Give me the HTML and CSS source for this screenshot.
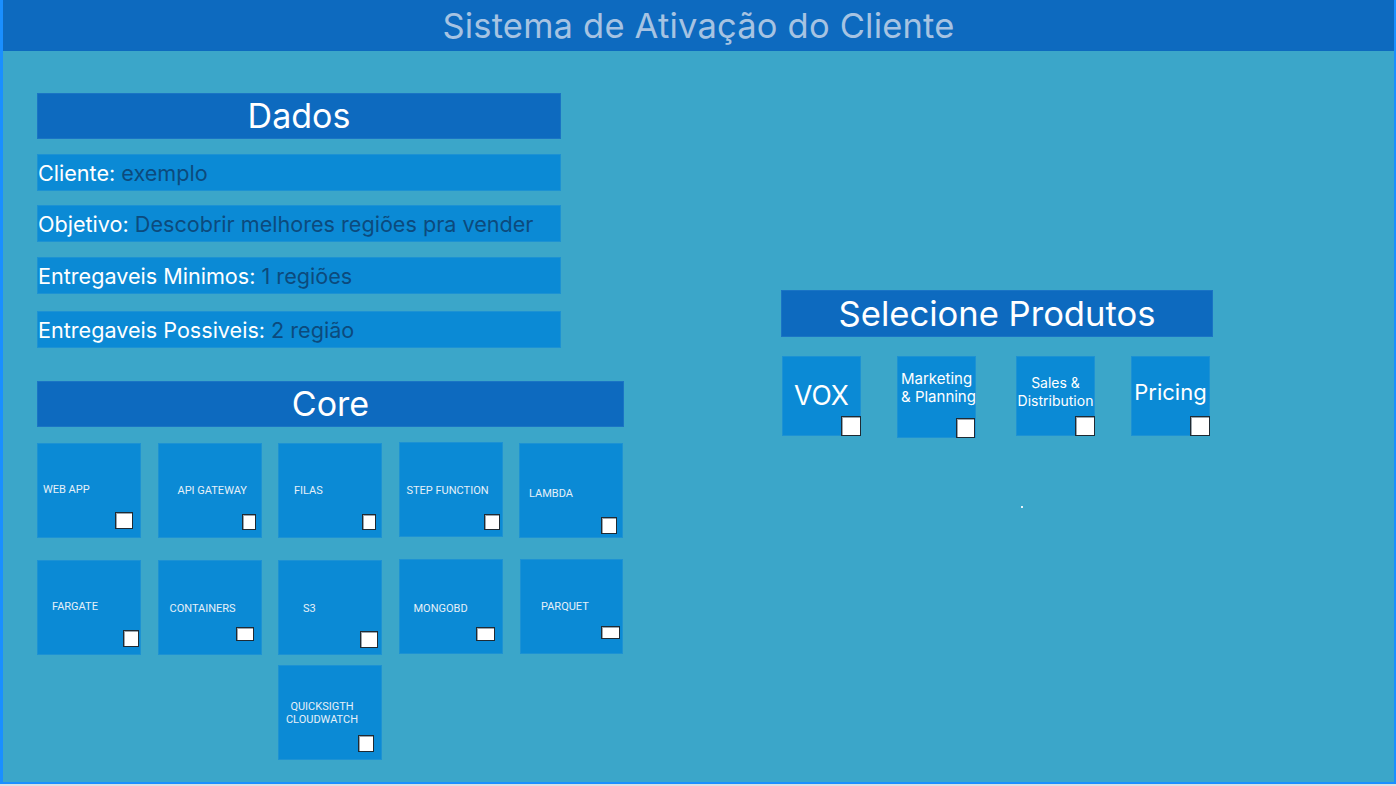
FILE: index.html
```html
<!DOCTYPE html>
<html lang="pt">
<head>
<meta charset="utf-8">
<title>Sistema de Ativação do Cliente</title>
<link rel="stylesheet" href="styles.css">
</head>
<body>
<div class="frame">
  <header class="topbar"><h1 class="title">Sistema de Ativação do Cliente</h1></header>
  <main class="content">
    <div class="left-col">
      <section class="dados">
        <h2 class="bar-title">Dados</h2>
        <div class="info-row r1"><span class="lbl">Cliente:</span> <span class="val">exemplo</span></div>
        <div class="info-row r2"><span class="lbl">Objetivo:</span> <span class="val">Descobrir melhores regiões pra vender</span></div>
        <div class="info-row r3"><span class="lbl">Entregaveis Minimos:</span> <span class="val">1 regiões</span></div>
        <div class="info-row r4"><span class="lbl">Entregaveis Possiveis:</span> <span class="val">2 região</span></div>
      </section>
      <section class="core">
        <h2 class="bar-title">Core</h2>
        <div class="core-grid">
          <div class="card c-webapp"><span class="card-label">WEB APP</span><span class="chk"></span></div>
          <div class="card c-api"><span class="card-label">API GATEWAY</span><span class="chk"></span></div>
          <div class="card c-filas"><span class="card-label">FILAS</span><span class="chk"></span></div>
          <div class="card c-step"><span class="card-label">STEP FUNCTION</span><span class="chk"></span></div>
          <div class="card c-lambda"><span class="card-label">LAMBDA</span><span class="chk"></span></div>
          <div class="card c-fargate"><span class="card-label">FARGATE</span><span class="chk"></span></div>
          <div class="card c-containers"><span class="card-label">CONTAINERS</span><span class="chk"></span></div>
          <div class="card c-s3"><span class="card-label">S3</span><span class="chk"></span></div>
          <div class="card c-mongo"><span class="card-label">MONGOBD</span><span class="chk"></span></div>
          <div class="card c-parquet"><span class="card-label">PARQUET</span><span class="chk"></span></div>
          <div class="card c-quick"><span class="card-label">QUICKSIGTH<br>CLOUDWATCH</span><span class="chk"></span></div>
        </div>
      </section>
    </div>
    <div class="right-col">
      <section class="produtos">
        <h2 class="bar-title prod-title">Selecione Produtos</h2>
        <div class="prod-row">
          <div class="pcard p-vox"><span class="plabel">VOX</span><span class="pchk"></span></div>
          <div class="pcard p-mkt"><span class="plabel">Marketing<br>&amp; Planning</span><span class="pchk"></span></div>
          <div class="pcard p-sales"><span class="plabel">Sales &amp;<br>Distribution</span><span class="pchk"></span></div>
          <div class="pcard p-pricing"><span class="plabel">Pricing</span><span class="pchk"></span></div>
        </div>
        <span class="dot"></span>
      </section>
    </div>
  </main>
</div>
</body>
</html>
```

FILE: styles.css
```css
html, body {
  margin: 0;
  padding: 0;
}
body {
  background: #dcdfe3;
  font-family: "Inter", "Roboto", sans-serif;
  width: 1396px;
  height: 786px;
  overflow: hidden;
}
.frame {
  box-sizing: border-box;
  width: 1396px;
  height: 784px;
  background: #3ba6c9;
  border-left: 3px solid #1a8fff;
  border-right: 2px solid #1a8fff;
  border-bottom: 2px solid #1a8fff;
  box-shadow: inset 0 1px 0 #1479d0;
}
.topbar {
  height: 51px;
  background: #0d6abf;
  display: flex;
  align-items: center;
  justify-content: center;
}
.title {
  margin: 0;
  font-weight: 400;
  font-size: 34.5px;
  color: #a6c3e2;
  letter-spacing: 0.2px;
  line-height: 1;
  padding-top: 2px;
}
.content {
  display: flex;
  padding: 42px 0 0 34px;
  column-gap: 157px;
}
.left-col {
  width: 587px;
  display: flex;
  flex-direction: column;
}
.bar-title {
  margin: 0;
  height: 46px;
  background: #0d6abf;
  color: #ffffff;
  font-weight: 400;
  font-size: 34px;
  line-height: 46px;
  text-align: center;
  box-shadow: inset 0 0 0 1px #1a74c4;
}
.dados {
  width: 524px;
  display: flex;
  flex-direction: column;
}
.info-row {
  box-sizing: border-box;
  height: 37px;
  background: #0b8ad5;
  font-size: 21.6px;
  line-height: 38px;
  padding-left: 1px;
  white-space: nowrap;
  box-shadow: inset 0 0 0 1px #1d92d3;
}
.info-row.r1 { margin-top: 15px; }
.info-row.r2 { margin-top: 14px; }
.info-row.r3 { margin-top: 15px; }
.info-row.r4 { margin-top: 17px; }
.lbl { color: #ffffff; }
.val { color: #0c4a7d; }

.core {
  margin-top: 33px;
  display: flex;
  flex-direction: column;
}
.core-grid {
  margin-top: 16px;
  display: grid;
  grid-template-columns: repeat(5, 104px);
  grid-auto-rows: 95px;
  column-gap: 16.5px;
  row-gap: 22px;
}
.card {
  display: grid;
  background: #0b8ad5;
  box-shadow: inset 0 0 0 1px #1d92d3;
  --lx: 8px; --ly: 40px; --bx: 80px; --by: 70px; --bw: 16px; --bh: 17px;
}
.card > * {
  grid-area: 1 / 1;
  align-self: start;
  justify-self: start;
}
.card-label {
  font-family: "Roboto", "Inter", sans-serif;
  font-size: 11px;
  line-height: 13px;
  color: #e6f0f8;
  margin-left: var(--lx);
  margin-top: var(--ly);
  white-space: nowrap;
}
.chk {
  box-sizing: border-box;
  width: var(--bw);
  height: var(--bh);
  margin-left: var(--bx);
  margin-top: var(--by);
  background: #ffffff;
  border: 1px solid #1f2a33;
  box-shadow: inset 1px 1px 0 #9aa4ab;
}
.c-webapp  { --lx: 6px;  --ly: 40px; --bx: 78px; --by: 69px; --bw: 18px; --bh: 17px; }
.c-api     { --lx: 20px; --ly: 41px; --bx: 84px; --by: 71px; --bw: 14px; --bh: 16px; }
.c-filas   { --lx: 16px; --ly: 41px; --bx: 84px; --by: 71px; --bw: 14px; --bh: 16px; }
.c-step    { --lx: 8px;  --ly: 42px; --bx: 85px; --by: 72px; --bw: 16px; --bh: 16px; margin-top: -1px; margin-bottom: 1px; }
.c-lambda  { --lx: 10px; --ly: 44px; --bx: 82px; --by: 74px; --bw: 16px; --bh: 17px; }
.c-fargate { --lx: 15px; --ly: 40px; --bx: 86px; --by: 70px; --bw: 16px; --bh: 17px; }
.c-containers { --lx: 12px; --ly: 42px; --bx: 78px; --by: 67px; --bw: 18px; --bh: 14px; }
.c-s3      { --lx: 25px; --ly: 42px; --bx: 82px; --by: 71px; --bw: 18px; --bh: 17px; }
.c-mongo   { --lx: 15px; --ly: 43px; --bx: 77px; --by: 68px; --bw: 19px; --bh: 14px; margin-top: -1px; margin-bottom: 1px; }
.c-parquet { --lx: 21px; --ly: 41px; --bx: 81px; --by: 67px; --bw: 19px; --bh: 13px; margin-top: -1px; margin-bottom: 1px; margin-left: 1px; }
.c-quick   {
  grid-column: 3;
  margin-top: -12px;
  margin-bottom: 12px;
  --lx: 0px; --ly: 35px; --bx: 80px; --by: 70px; --bw: 16px; --bh: 17px;
}
.c-quick .card-label {
  width: 88px;
  text-align: center;
}

.right-col {
  margin-top: 197px;
  width: 432px;
}
.produtos {
  display: flex;
  flex-direction: column;
  align-items: flex-start;
}
.prod-title {
  width: 432px;
  height: 47px;
  line-height: 47px;
  font-size: 34.6px;
}
.prod-row {
  margin-top: 19px;
  display: flex;
  align-items: flex-start;
}
.pcard {
  display: grid;
  width: 79px;
  height: 80px;
  background: #0b8ad5;
  box-shadow: inset 0 0 0 1px #1d92d3;
  color: #ffffff;
}
.pcard > * { grid-area: 1 / 1; }
.plabel {
  align-self: start;
  justify-self: center;
  text-align: center;
  white-space: nowrap;
}
.pchk {
  box-sizing: border-box;
  width: 20px;
  height: 20px;
  align-self: end;
  justify-self: end;
  background: #ffffff;
  border: 1px solid #1f2a33;
  box-shadow: inset 1px 1px 0 #9aa4ab;
}
.p-vox { margin-left: 1px; }
.p-vox .plabel { font-size: 26.5px; line-height: 30px; margin-top: 24px; }
.p-mkt { margin-left: 36px; height: 82px; }
.p-mkt .plabel {
  font-size: 15px; line-height: 18px; margin-top: 14px;
  justify-self: start; text-align: left; margin-left: 4px;
}
.p-mkt .pchk { margin-right: 1px; width: 19px; }
.p-sales { margin-left: 40px; }
.p-sales .plabel { font-size: 14px; line-height: 17.5px; margin-top: 18px; }
.p-pricing { margin-left: 36px; height: 79.5px; }
.p-pricing .plabel { font-size: 22px; line-height: 26px; margin-top: 23px; }
.dot {
  width: 2px;
  height: 2px;
  background: #e8f4fa;
  margin-left: 240px;
  margin-top: 68px;
}
```
